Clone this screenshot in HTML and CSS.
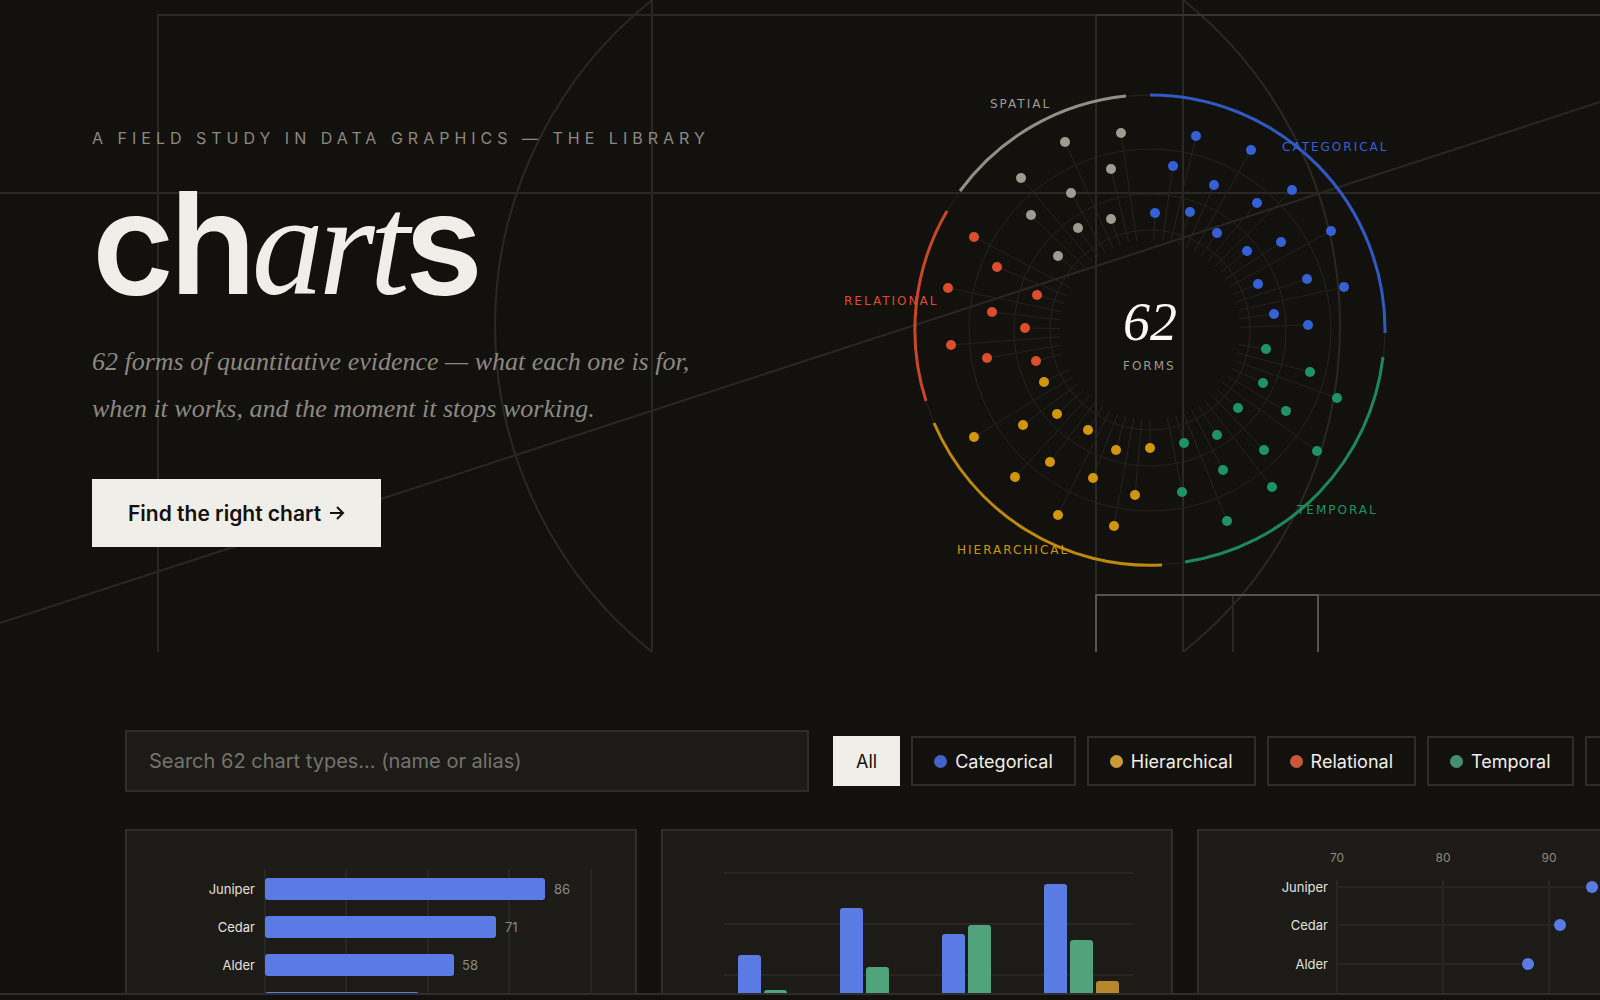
FILE: index.html
```
<!DOCTYPE html>
<html lang="en">
  <head>
    <meta charset="UTF-8" />
    <meta name="viewport" content="width=device-width, initial-scale=1.0" />
    <title>charts</title>
    <link rel="stylesheet" href="styles.css" />
  </head>
  <body>
    <header class="hero">
      <svg class="hero-lines" viewBox="0 0 1600 652" preserveAspectRatio="none" aria-hidden="true">
        <path d="M158 652V15H1096M0 193H1600M652 0V652M1096 15V595M1183 0V652M0 623L1600 102" />
        <path d="M652 0A417 417 0 0 0 652 652M1183 0A417 417 0 0 1 1183 652" />
        <path d="M1233 595V652" />
        <path class="mid" d="M1096 15H1600M1318 595H1600" />
        <path class="bright" d="M1096 652V595H1318V652" />
      </svg>
      <div class="intro">
        <p class="eyebrow">A field study in data graphics — the library</p>
        <h1>ch<em>art</em>s</h1>
        <p class="lead">62 forms of quantitative evidence — what each one is for,<br />when it works, and the moment it stops working.</p>
        <button class="cta" type="button">
          Find the right chart
          <svg viewBox="0 0 16 16" aria-hidden="true"><path d="M1 8H14M8 2L14 8L8 14" /></svg>
        </button>
      </div>
      <svg class="wheel" viewBox="0 0 600 600" role="img" aria-label="62 chart forms by family">
        <g class="rings">
          <circle cx="300" cy="300" r="100" />
          <circle cx="300" cy="300" r="136" />
          <circle cx="300" cy="300" r="181" />
          <circle cx="300" cy="300" r="235" />
        </g>
        <g id="spokes"></g>
        <g class="arcs">
          <path class="categorical" d="M300 65A235 235 0 0 1 535 303" />
          <path class="temporal" d="M533 327A235 235 0 0 1 335 532" />
          <path class="hierarchical" d="M312 535A235 235 0 0 1 84 393" />
          <path class="relational" d="M76 371A235 235 0 0 1 97 181" />
          <path class="spatial" d="M110 161A235 235 0 0 1 276 66" />
        </g>
        <g id="dots"></g>
        <g class="labels">
          <text class="categorical" x="432" y="121">CATEGORICAL</text>
          <text class="temporal" x="447" y="484">TEMPORAL</text>
          <text class="hierarchical" x="107" y="524">HIERARCHICAL</text>
          <text class="relational" x="-6" y="275">RELATIONAL</text>
          <text class="spatial" x="140" y="78">SPATIAL</text>
          <text class="forms" x="273" y="340">FORMS</text>
        </g>
        <text class="total" x="300" y="310">62</text>
      </svg>
    </header>

    <main class="library">
      <div class="toolbar">
        <input class="search" type="search" aria-label="Search chart types" placeholder="Search 62 chart types… (name or alias)" />
        <div class="filters">
          <button class="chip active" type="button">All</button>
          <button class="chip" type="button"><i class="categorical"></i>Categorical</button>
          <button class="chip" type="button"><i class="hierarchical"></i>Hierarchical</button>
          <button class="chip" type="button"><i class="relational"></i>Relational</button>
          <button class="chip" type="button"><i class="temporal"></i>Temporal</button>
          <button class="chip" type="button"><i class="spatial"></i>Spatial</button>
        </div>
      </div>

      <div class="cards">
        <a class="card" href="#bar" aria-label="Bar chart">
          <svg viewBox="0 1 508 340">
            <path class="grid" d="M138 40V300M219 40V300M301 40V300M382 40V300M464 40V300" />
            <g class="blue">
              <rect x="138" y="48" width="280" height="22" rx="3" />
              <rect x="138" y="86" width="231" height="22" rx="3" />
              <rect x="138" y="124" width="189" height="22" rx="3" />
              <rect x="138" y="162" width="154" height="22" rx="3" />
            </g>
            <g class="names">
              <text x="128" y="64">Juniper</text>
              <text x="128" y="102">Cedar</text>
              <text x="128" y="140">Alder</text>
            </g>
            <g class="values">
              <text x="427" y="64">86</text>
              <text x="378" y="102">71</text>
              <text x="335" y="140">58</text>
            </g>
          </svg>
        </a>
        <a class="card" href="#grouped" aria-label="Grouped bar chart">
          <svg viewBox="0 1 508 340">
            <path class="grid" d="M61 43H470M61 94H470M61 145H470" />
            <path class="blue" d="M75 165V128q0-3 3-3h17q3 0 3 3V165ZM177 165V81q0-3 3-3h17q3 0 3 3V165ZM279 165V107q0-3 3-3h17q3 0 3 3V165ZM381 165V57q0-3 3-3h17q3 0 3 3V165Z" />
            <path class="green" d="M101 165V163q0-3 3-3h17q3 0 3 3V165ZM203 165V140q0-3 3-3h17q3 0 3 3V165ZM305 165V98q0-3 3-3h17q3 0 3 3V165ZM407 165V113q0-3 3-3h17q3 0 3 3V165Z" />
            <path class="gold" d="M433 165V154q0-3 3-3h17q3 0 3 3V165Z" />
          </svg>
        </a>
        <a class="card" href="#dot" aria-label="Dot plot">
          <svg viewBox="0 1 508 340">
            <path class="grid" d="M138 50V300M244 50V300M350 50V300M456 50V300M138 57H393M138 95H361M138 134H329" />
            <g class="blue">
              <circle cx="393" cy="57" r="6" />
              <circle cx="361" cy="95" r="6" />
              <circle cx="329" cy="134" r="6" />
            </g>
            <g class="names">
              <text x="129" y="62">Juniper</text>
              <text x="129" y="100">Cedar</text>
              <text x="129" y="139">Alder</text>
            </g>
            <g class="values ticks">
              <text x="138" y="32">70</text>
              <text x="244" y="32">80</text>
              <text x="350" y="32">90</text>
            </g>
          </svg>
        </a>
      </div>
    </main>
    <div class="bottom-bar"></div>
    <script src="wheel.js"></script>
  </body>
</html>
```

FILE: styles.css
```
:root {
  --bg: #12110d;
  --panel: #1c1b17;
  --line: #2e2d29;
  --ink: #f0eee9;
  --muted: #8b8982;
  --categorical: #3461d6;
  --temporal: #1d9468;
  --hierarchical: #d1960d;
  --relational: #dc4d2b;
  --spatial: #9e9c90;
}

* {
  box-sizing: border-box;
}

body {
  margin: 0;
  height: 100vh;
  overflow: hidden;
  color: var(--ink);
  background: var(--bg);
  font-family: Inter, 'Liberation Sans', sans-serif;
}

button {
  font: inherit;
}

.hero {
  position: relative;
  height: 652px;
  padding-left: 92px;
  display: grid;
  grid-template-columns: 758px 600px;
  align-items: start;
}

.hero-lines {
  position: absolute;
  inset: 0;
  width: 100%;
  height: 100%;
  fill: none;
  stroke: #292824;
  stroke-width: 2;
}

.hero-lines .mid {
  stroke: #353430;
}

.hero-lines .bright {
  stroke: #55544f;
}

.intro {
  position: relative;
  padding-top: 126px;
}

.eyebrow {
  margin: 0;
  color: var(--muted);
  font-size: 16px;
  line-height: 24px;
  letter-spacing: 5px;
  text-transform: uppercase;
}

h1 {
  margin: 12px 0 0;
  font-size: 142px;
  line-height: 160px;
  font-weight: 600;
  letter-spacing: -5px;
}

h1 em {
  font-family: 'Liberation Serif', serif;
  font-size: 144px;
  font-weight: 400;
  line-height: 100px;
}

.lead {
  margin: 16px 0 0;
  color: var(--muted);
  font-family: 'Liberation Serif', serif;
  font-size: 26px;
  font-style: italic;
  line-height: 47px;
}

.cta {
  display: flex;
  align-items: center;
  gap: 8px;
  height: 68px;
  margin-top: 47px;
  padding: 0 36px;
  border: 0;
  color: var(--bg);
  background: var(--ink);
  font-size: 21px;
  font-weight: 600;
}

.cta svg {
  width: 16px;
  height: 16px;
  fill: none;
  stroke: currentColor;
  stroke-width: 2;
}

.wheel {
  position: relative;
  width: 600px;
  height: 600px;
  margin-top: 30px;
  overflow: visible;
}

.rings,
#spokes {
  fill: none;
  stroke: #24231f;
}

.arcs path {
  fill: none;
  stroke: var(--family);
  stroke-width: 3;
  opacity: 0.9;
}

#dots circle {
  fill: var(--family);
}

.labels text {
  fill: var(--family);
  font-family: 'DejaVu Sans', sans-serif;
  font-size: 12px;
  letter-spacing: 2px;
}

.total {
  fill: #fcfaf5;
  font-family: 'Liberation Serif', serif;
  font-size: 54px;
  font-style: italic;
  text-anchor: middle;
}

.categorical { --family: var(--categorical); }
.temporal { --family: var(--temporal); }
.hierarchical { --family: var(--hierarchical); }
.relational { --family: var(--relational); }
.spatial,
.forms { --family: var(--spatial); }

.library {
  padding: 78px 0 0 125px;
}

.toolbar {
  display: flex;
  align-items: center;
  gap: 24px;
}

.search {
  width: 684px;
  height: 62px;
  flex: none;
  padding: 0 22px;
  border: 2px solid var(--line);
  color: var(--ink);
  background: var(--panel);
  font: inherit;
  font-size: 20px;
}

.search::placeholder {
  color: #75736d;
}

.filters {
  display: flex;
  gap: 11px;
}

.chip {
  display: flex;
  flex: none;
  align-items: center;
  gap: 8px;
  height: 50px;
  padding: 0 21px;
  border: 2px solid var(--line);
  color: var(--ink);
  background: var(--bg);
  font-size: 18px;
}

.chip.active {
  border-color: var(--ink);
  color: var(--bg);
  background: var(--ink);
}

.chip i {
  width: 13px;
  height: 13px;
  border-radius: 50%;
  background: var(--family);
}

.chip .categorical { --family: #4363c9; }
.chip .hierarchical { --family: #c99a38; }
.chip .relational { --family: #c9583a; }
.chip .temporal { --family: #458f70; }

.cards {
  display: grid;
  grid-template-columns: repeat(3, 512px);
  gap: 24px;
  margin-top: 37px;
}

.card {
  border: 2px solid var(--line);
  background: var(--panel);
}

.card svg {
  display: block;
  width: 100%;
}

.grid {
  fill: none;
  stroke: #272622;
  stroke-width: 2;
}

.blue { fill: #5a7be3; }
.green { fill: #50a37a; }
.gold { fill: #b5872c; }

.names text {
  fill: #e3e1dc;
  font-size: 13px;
  text-anchor: end;
}

.values text {
  fill: var(--muted);
  font-size: 13px;
}

.values.ticks text {
  font-size: 12px;
  text-anchor: middle;
}

.bottom-bar {
  position: fixed;
  left: 0;
  right: 0;
  bottom: 0;
  height: 7px;
  border-top: 2px solid var(--line);
  background: var(--bg);
}
```

FILE: wheel.js
```
const families = {
  categorical: [
    [305, 183], [323, 136], [346, 106], [340, 182], [364, 155], [401, 120],
    [367, 203], [407, 173], [442, 160], [397, 221], [431, 212], [481, 201],
    [408, 254], [457, 249], [494, 257], [424, 284], [458, 295],
  ],
  temporal: [
    [416, 319], [460, 342], [487, 368], [413, 353], [436, 381], [467, 421],
    [388, 378], [414, 420], [422, 457], [367, 405], [373, 440], [377, 491],
    [334, 413], [332, 462],
  ],
  hierarchical: [
    [300, 418], [285, 465], [264, 496], [266, 420], [243, 448], [208, 485],
    [238, 400], [200, 432], [165, 447], [207, 384], [173, 395], [124, 407],
    [194, 352],
  ],
  relational: [
    [186, 331], [137, 328], [101, 315], [175, 298], [142, 282], [98, 258],
    [187, 265], [147, 237], [124, 207],
  ],
  spatial: [
    [208, 226], [181, 185], [171, 148], [228, 198], [221, 163], [215, 112],
    [261, 189], [261, 139], [271, 103],
  ],
};

const center = 300;
const hub = 90;

function draw(parent, tag, attrs) {
  const el = document.createElementNS('http://www.w3.org/2000/svg', tag);
  Object.keys(attrs).forEach((key) => el.setAttribute(key, attrs[key]));
  document.querySelector(parent).appendChild(el);
}

Object.entries(families).forEach(([name, dots]) => {
  dots.forEach(([x, y]) => {
    const angle = Math.atan2(y - center, x - center);
    draw('#spokes', 'line', {
      x1: center + hub * Math.cos(angle),
      y1: center + hub * Math.sin(angle),
      x2: x,
      y2: y,
    });
    draw('#dots', 'circle', { cx: x, cy: y, r: 5, class: name });
  });
});
```
